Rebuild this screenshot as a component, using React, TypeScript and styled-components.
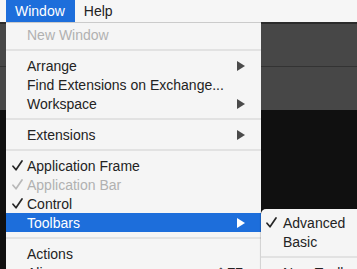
import React from "react";
import styled, { createGlobalStyle } from "styled-components";

const GlobalStyle = createGlobalStyle`
  body {
    margin: 0;
    background: #101010;
    font-family: "Liberation Sans", Arial, sans-serif;
    overflow: hidden;
  }
`;

const Screen = styled.div`
  position: relative;
  width: 357px;
  height: 269px;
  overflow: hidden;
  display: flex;
  flex-direction: column;
`;

const MenuBar = styled.div`
  height: 22px;
  flex: none;
  display: flex;
  padding-left: 6px;
  background: #f6f6f6;
`;

const MenuTitle = styled.div<{ active?: boolean }>`
  height: 22px;
  line-height: 22px;
  padding: 0 10px 0 9px;
  font-size: 14px;
  color: ${(p) => (p.active ? "#ffffff" : "#222222")};
  background: ${(p) => (p.active ? "#1d6edb" : "transparent")};
`;

const Workspace = styled.div`
  flex: 1;
  display: flex;
  flex-direction: column;
`;

const AppBar = styled.div<{ top?: boolean }>`
  height: ${(p) => (p.top ? "42px" : "43px")};
  flex: none;
  background: #474747;
  border-top: ${(p) => (p.top ? "2px solid #2b2b2b" : "none")};
  border-bottom: ${(p) => (p.top ? "1px solid #333333" : "none")};
`;

const Canvas = styled.div`
  flex: 1;
  background: #101010;
`;

const Dropdown = styled.div`
  position: absolute;
  left: 6px;
  top: 22px;
  width: 255px;
  height: 260px;
  padding-top: 2px;
  border-top: 1px solid #cbcbcb;
  background: #f5f5f5;
`;

const SubMenu = styled.div`
  position: absolute;
  left: 261px;
  top: 209px;
  width: 130px;
  height: 80px;
  padding-top: 4px;
  background: #f5f5f5;
  border-top-left-radius: 5px;
  box-shadow: -1px 0 1px rgba(0, 0, 0, 0.15);
`;

const Item = styled.div<{ disabled?: boolean; selected?: boolean; indent?: number }>`
  position: relative;
  height: 19px;
  display: flex;
  align-items: center;
  padding-left: ${(p) => p.indent ?? 21}px;
  padding-right: 16px;
  font-size: 14px;
  white-space: nowrap;
  color: ${(p) => (p.selected ? "#ffffff" : p.disabled ? "#b1b1b1" : "#232323")};
  background: ${(p) => (p.selected ? "#1d6edb" : "transparent")};
`;

const Label = styled.span`
  flex: 1;
`;

const Check = styled.svg`
  position: absolute;
  top: 4px;
`;

const Shortcut = styled.span`
  margin-right: 2px;
`;

const Separator = styled.div`
  height: 12px;
  display: flex;
  align-items: center;
  &::after {
    content: "";
    flex: 1;
    height: 2px;
    background: #e2e2e2;
  }
`;

const Arrow = ({ color }: { color: string }) => (
  <svg width="8" height="10" viewBox="0 0 8 10">
    <polygon points="0,0 8,5 0,10" fill={color} />
  </svg>
);

type Entry =
  | { sep: true }
  | {
      label: string;
      disabled?: boolean;
      checked?: boolean;
      sub?: boolean;
      selected?: boolean;
      shortcut?: string;
    };

const windowMenu: Entry[] = [
  { label: "New Window", disabled: true },
  { sep: true },
  { label: "Arrange", sub: true },
  { label: "Find Extensions on Exchange..." },
  { label: "Workspace", sub: true },
  { sep: true },
  { label: "Extensions", sub: true },
  { sep: true },
  { label: "Application Frame", checked: true },
  { label: "Application Bar", checked: true, disabled: true },
  { label: "Control", checked: true },
  { label: "Toolbars", sub: true, selected: true },
  { sep: true },
  { label: "Actions" },
  { label: "Align", shortcut: "⇧F7" },
];

const toolbarsMenu: Entry[] = [
  { label: "Advanced", checked: true },
  { label: "Basic" },
  { sep: true },
  { label: "New Toolbar..." },
];

function MenuList({ entries, indent, checkLeft }: { entries: Entry[]; indent: number; checkLeft: number }) {
  return (
    <>
      {entries.map((e, i) => {
        if ("sep" in e) return <Separator key={i} />;
        const color = e.selected ? "#ffffff" : e.disabled ? "#b8b8b8" : "#262626";
        return (
          <Item key={i} disabled={e.disabled} selected={e.selected} indent={indent}>
            {e.checked && (
              <Check width="11" height="11" viewBox="0 0 11 11" style={{ left: checkLeft }}>
                <path d="M1 6.2 L4 9.8 L10 1" fill="none" stroke={color} strokeWidth="1.7" strokeLinecap="round" strokeLinejoin="round" />
              </Check>
            )}
            <Label>{e.label}</Label>
            {e.shortcut && <Shortcut>{e.shortcut}</Shortcut>}
            {e.sub && <Arrow color={e.selected ? "#ffffff" : "#4a4a4a"} />}
          </Item>
        );
      })}
    </>
  );
}

export default function App() {
  return (
    <Screen>
      <GlobalStyle />
      <MenuBar>
        <MenuTitle active>Window</MenuTitle>
        <MenuTitle>Help</MenuTitle>
      </MenuBar>
      <Workspace>
        <AppBar top />
        <AppBar />
        <Canvas />
      </Workspace>
      <Dropdown>
        <MenuList entries={windowMenu} indent={21} checkLeft={6} />
      </Dropdown>
      <SubMenu>
        <MenuList entries={toolbarsMenu} indent={22} checkLeft={5} />
      </SubMenu>
    </Screen>
  );
}
